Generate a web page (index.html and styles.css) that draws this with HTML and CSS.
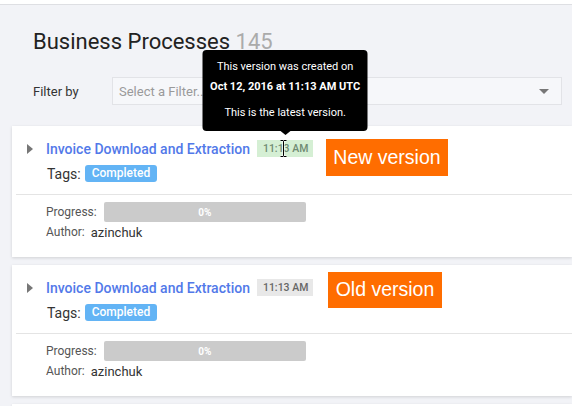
FILE: index.html
```html
<!DOCTYPE html>
<html lang="en">
<head>
<meta charset="utf-8">
<title>Business Processes</title>
<link rel="stylesheet" href="styles.css">
</head>
<body>
<div class="topbar"></div>
<main class="page">
  <header class="page-head">
    <h1 class="title">Business Processes <span class="count">145</span></h1>
    <div class="filter-row">
      <label class="filter-label">Filter by</label>
      <div class="select">
        <span class="placeholder">Select a Filter...</span>
        <span class="select-arrow"></span>
      </div>
    </div>
  </header>

  <section class="process-list">
    <article class="card">
      <div class="card-head">
        <div class="name-row">
          <span class="caret"></span>
          <a class="proc-name" href="#">Invoice Download and Extraction</a>
          <span class="time-wrap">
            <span class="time time-new">11:13 AM</span>
            <div class="tooltip">
              <div class="tip-line">This version was created on</div>
              <div class="tip-line tip-strong">Oct 12, 2016 at 11:13 AM UTC</div>
              <div class="tip-line tip-gap">This is the latest version.</div>
            </div>
            <svg class="ibeam" width="7" height="17" viewBox="0 0 7 17">
              <path d="M0.5 0.5h2.5l0.5 1 0.5-1h2.5M3.5 1.5v14M0.5 16.5h2.5l0.5-1 0.5 1h2.5" fill="none" stroke="#fff" stroke-width="2"/>
              <path d="M0.5 0.5h2.5l0.5 1 0.5-1h2.5M3.5 1.5v14M0.5 16.5h2.5l0.5-1 0.5 1h2.5" fill="none" stroke="#000" stroke-width="1"/>
            </svg>
          </span>
        </div>
        <div class="tags-row">
          <span class="tags-label">Tags:</span>
          <span class="tag">Completed</span>
        </div>
        <div class="note note-new">New version</div>
      </div>
      <div class="card-body">
        <div class="progress-row">
          <span class="meta-label">Progress:</span>
          <div class="bar"><span class="bar-text">0%</span></div>
        </div>
        <div class="author-row">
          <span class="meta-label">Author:</span>
          <span class="author">azinchuk</span>
        </div>
      </div>
    </article>

    <article class="card">
      <div class="card-head">
        <div class="name-row">
          <span class="caret"></span>
          <a class="proc-name" href="#">Invoice Download and Extraction</a>
          <span class="time-wrap">
            <span class="time time-old">11:13 AM</span>
          </span>
        </div>
        <div class="tags-row">
          <span class="tags-label">Tags:</span>
          <span class="tag">Completed</span>
        </div>
        <div class="note note-old">Old version</div>
      </div>
      <div class="card-body">
        <div class="progress-row">
          <span class="meta-label">Progress:</span>
          <div class="bar"><span class="bar-text">0%</span></div>
        </div>
        <div class="author-row">
          <span class="meta-label">Author:</span>
          <span class="author">azinchuk</span>
        </div>
      </div>
    </article>

    <article class="card card-peek"></article>
  </section>
</main>
</body>
</html>
```

FILE: styles.css
```css
* {
  box-sizing: border-box;
}

html, body {
  margin: 0;
  padding: 0;
}

body {
  background: #f2f3f7;
  font-family: Roboto, "Noto Sans", sans-serif;
  color: #222;
  overflow: hidden;
  height: 406px;
}

.topbar {
  height: 5px;
  background: #fff;
  border-bottom: 1px solid #dedfe3;
}

.page-head {
  padding: 0 10px 0 33px;
}

.title {
  margin: 23px 0 0;
  font-size: 22px;
  line-height: 28px;
  font-weight: 400;
  color: #222;
}

.count {
  color: #ababab;
}

.filter-row {
  display: flex;
  align-items: center;
  margin-top: 21px;
}

.filter-label {
  width: 79px;
  font-size: 13px;
  color: #333;
}

.select {
  width: 450px;
  height: 28px;
  border: 1px solid #e2e3e7;
  background: #f6f7fa;
  display: flex;
  align-items: center;
  justify-content: space-between;
  padding: 0 12px 0 6px;
}

.placeholder {
  font-size: 13px;
  color: #9a9a9a;
}

.select-arrow {
  width: 0;
  height: 0;
  border-left: 5px solid transparent;
  border-right: 5px solid transparent;
  border-top: 5px solid #777;
}

.process-list {
  margin: 21px 0 0 12px;
  display: flex;
  flex-direction: column;
  gap: 8px;
}

.card {
  position: relative;
  background: #fff;
  height: 131px;
  box-shadow: 0 1px 3px rgba(0, 0, 0, 0.14);
}

.card-peek {
  height: 2px;
}

.card-head {
  padding: 14px 0 12px 11px;
  border-bottom: 1px solid #e4e4e4;
  margin-left: 4px;
}

.name-row {
  display: flex;
  align-items: center;
  height: 17px;
}

.caret {
  width: 0;
  height: 0;
  border-top: 5px solid transparent;
  border-bottom: 5px solid transparent;
  border-left: 6px solid #777;
  margin-right: 13px;
}

.proc-name {
  font-size: 14px;
  font-weight: 500;
  color: #5279e9;
  text-decoration: none;
  margin-right: 7px;
}

.time-wrap {
  position: relative;
  display: inline-flex;
}

.time {
  display: inline-block;
  height: 17px;
  line-height: 17px;
  padding: 0 5px 0 6px;
  font-size: 10.5px;
  font-weight: 500;
}

.time-new {
  background: #d5efd4;
  color: #6f8a72;
}

.time-old {
  background: #e8e8e8;
  color: #666;
}

.tooltip {
  position: absolute;
  left: 50%;
  bottom: calc(100% + 9px);
  transform: translateX(-50%);
  width: 165px;
  padding: 7px 0 8px;
  background: #000;
  border-radius: 4px;
  color: #fff;
  font-size: 11px;
  line-height: 20px;
  text-align: center;
  white-space: nowrap;
  z-index: 2;
}

.tooltip::after {
  content: "";
  position: absolute;
  left: 50%;
  top: 100%;
  margin-left: -5px;
  border-left: 5px solid transparent;
  border-right: 5px solid transparent;
  border-top: 4px solid #000;
}

.tip-strong {
  font-weight: 700;
}

.tip-gap {
  margin-top: 6px;
}

.ibeam {
  position: absolute;
  left: 23px;
  top: 0;
  z-index: 3;
}

.tags-row {
  display: flex;
  align-items: center;
  margin-top: 8px;
  padding-left: 20px;
  height: 17px;
}

.tags-label {
  font-size: 14px;
  color: #333;
  margin-right: 4px;
}

.tag {
  display: inline-block;
  height: 17px;
  line-height: 17px;
  padding: 0 7px;
  border-radius: 3px;
  background: #63b4f5;
  color: #fff;
  font-size: 12px;
  font-weight: 500;
}

.note {
  position: absolute;
  background: #ff6d00;
  color: #fff;
  font-family: "Liberation Sans", Arial, sans-serif;
  font-size: 19.5px;
  line-height: 1;
  display: flex;
  align-items: center;
  justify-content: center;
}

.note-new {
  left: 314px;
  top: 13px;
  width: 122px;
  height: 37px;
}

.note-old {
  left: 316px;
  top: 7px;
  width: 114px;
  height: 36px;
}

.card-body {
  padding: 7px 0 0 34px;
}

.progress-row {
  display: flex;
  align-items: center;
  height: 20px;
}

.meta-label {
  font-size: 12px;
  color: #555;
  margin-right: 6px;
}

.bar {
  width: 202px;
  height: 20px;
  border-radius: 2px;
  background: #cbcbcb;
  display: flex;
  align-items: center;
  justify-content: center;
  margin-left: 1px;
}

.bar-text {
  color: #fff;
  font-size: 10px;
  font-weight: 700;
}

.author-row {
  display: flex;
  align-items: center;
  height: 20px;
}

.author {
  font-size: 13px;
  color: #333;
}
```
